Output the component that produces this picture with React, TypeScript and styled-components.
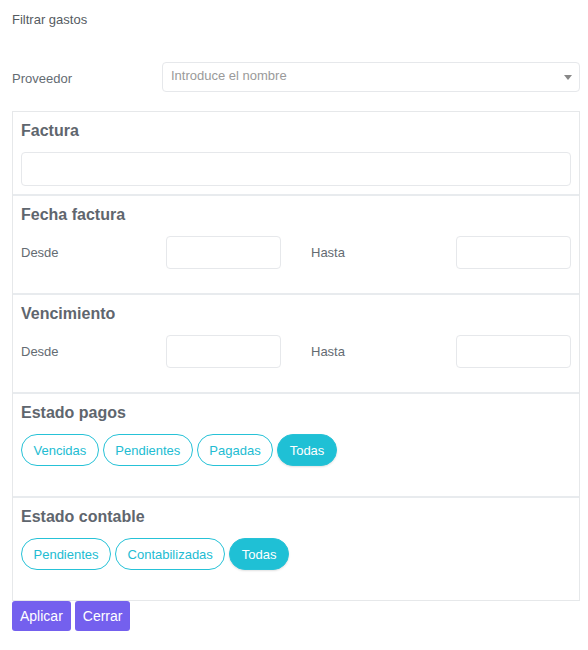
import React from "react";
import styled, { createGlobalStyle } from "styled-components";

const Global = createGlobalStyle`
  html, body { margin: 0; padding: 0; background: #fff; }
  body { font-family: "Liberation Sans", Arial, sans-serif; }
  * { box-sizing: border-box; }
`;

const Page = styled.div`
  padding: 12px 8px 12px 12px;
  width: 588px;
`;

const Title = styled.div`
  font-size: 13px;
  line-height: 16px;
  color: #555b62;
`;

const ProviderRow = styled.div`
  display: flex;
  align-items: center;
  margin-top: 34px;
`;

const Label = styled.div`
  font-size: 13px;
  color: #646b72;
`;

const ProviderLabel = styled(Label)`
  width: 150px;
  flex: none;
  padding-top: 2px;
`;

const Select = styled.div`
  position: relative;
  flex: 1;
  height: 30px;
  border: 1px solid #e6e8eb;
  border-radius: 4px;
  display: flex;
  align-items: center;
  padding: 0 8px 3px;
  font-size: 13px;
  color: #9a9a9a;
`;

const Caret = styled.span`
  position: absolute;
  right: 7px;
  top: 12px;
  width: 0;
  height: 0;
  border-left: 4px solid transparent;
  border-right: 4px solid transparent;
  border-top: 5px solid #888;
`;

const Panel = styled.div`
  margin-top: 19px;
  border: 1px solid #e6e8ea;
`;

const Section = styled.div<{ $bottom: number }>`
  padding: 8px 8px ${(p) => p.$bottom}px;
  & + & {
    border-top: 2px solid #e8ebee;
  }
`;

const Heading = styled.div`
  font-size: 16px;
  line-height: 22px;
  font-weight: 700;
  color: #5f666e;
  margin-bottom: 10px;
`;

const TextInput = styled.div<{ $h: number }>`
  height: ${(p) => p.$h}px;
  border: 1px solid #e6e8eb;
  border-radius: 4px;
  background: #fff;
`;

const DateGrid = styled.div`
  display: grid;
  grid-template-columns: repeat(4, 1fr);
  column-gap: 30px;
  align-items: center;
`;

const Pills = styled.div`
  display: flex;
  gap: 4px;
`;

const Pill = styled.div<{ $active?: boolean }>`
  height: 32px;
  padding: 0 11.5px;
  border-radius: 16px;
  display: flex;
  align-items: center;
  font-size: 13px;
  border: 1px solid #26c2d7;
  color: ${(p) => (p.$active ? "#fff" : "#22bcd2")};
  background: ${(p) => (p.$active ? "#1fc0d5" : "#fff")};
  box-shadow: ${(p) => (p.$active ? "0 1px 2px rgba(0,0,0,0.12)" : "none")};
`;

const Actions = styled.div`
  display: flex;
  gap: 4px;
`;

const Button = styled.div`
  height: 30px;
  padding: 0 8px;
  display: flex;
  align-items: center;
  border-radius: 3px;
  background: #7460ee;
  color: #fff;
  font-size: 14px;
`;

const DateRow = () => (
  <DateGrid>
    <Label>Desde</Label>
    <TextInput $h={33} />
    <Label>Hasta</Label>
    <TextInput $h={33} />
  </DateGrid>
);

export default function App() {
  return (
    <>
      <Global />
      <Page>
        <Title>Filtrar gastos</Title>
        <ProviderRow>
          <ProviderLabel>Proveedor</ProviderLabel>
          <Select>
            Introduce el nombre
            <Caret />
          </Select>
        </ProviderRow>
        <Panel>
          <Section $bottom={8}>
            <Heading>Factura</Heading>
            <TextInput $h={34} />
          </Section>
          <Section $bottom={24}>
            <Heading>Fecha factura</Heading>
            <DateRow />
          </Section>
          <Section $bottom={24}>
            <Heading>Vencimiento</Heading>
            <DateRow />
          </Section>
          <Section $bottom={30}>
            <Heading>Estado pagos</Heading>
            <Pills>
              <Pill>Vencidas</Pill>
              <Pill>Pendientes</Pill>
              <Pill>Pagadas</Pill>
              <Pill $active>Todas</Pill>
            </Pills>
          </Section>
          <Section $bottom={30}>
            <Heading>Estado contable</Heading>
            <Pills>
              <Pill>Pendientes</Pill>
              <Pill>Contabilizadas</Pill>
              <Pill $active>Todas</Pill>
            </Pills>
          </Section>
        </Panel>
        <Actions>
          <Button>Aplicar</Button>
          <Button>Cerrar</Button>
        </Actions>
      </Page>
    </>
  );
}
